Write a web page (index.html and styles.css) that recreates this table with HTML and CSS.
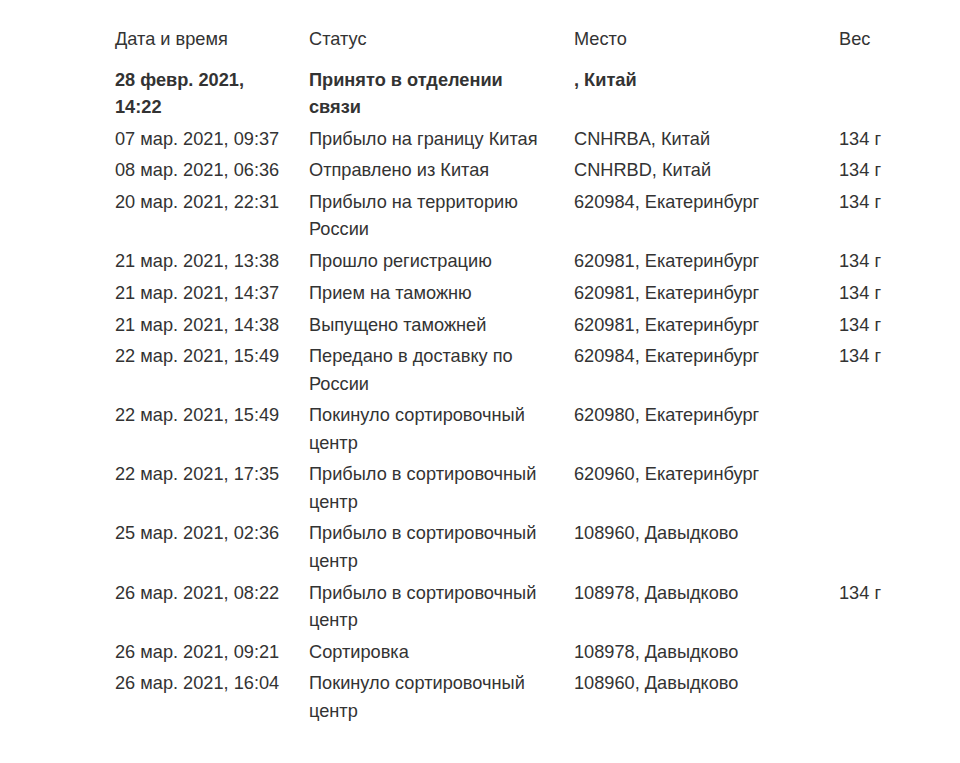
FILE: index.html
```html
<!DOCTYPE html>
<html lang="ru">
<head>
<meta charset="utf-8">
<link rel="stylesheet" href="styles.css">
</head>
<body>
<div class="page">
  <table class="track">
    <thead>
      <tr><th>Дата и время</th><th>Статус</th><th>Место</th><th>Вес</th></tr>
    </thead>
    <tbody>
      <tr class="first"><td>28 февр. 2021, 14:22</td><td>Принято в отделении связи</td><td>, Китай</td><td></td></tr>
      <tr><td>07 мар. 2021, 09:37</td><td>Прибыло на границу Китая</td><td>CNHRBA, Китай</td><td>134 г</td></tr>
      <tr><td>08 мар. 2021, 06:36</td><td>Отправлено из Китая</td><td>CNHRBD, Китай</td><td>134 г</td></tr>
      <tr><td>20 мар. 2021, 22:31</td><td>Прибыло на территорию России</td><td>620984, Екатеринбург</td><td>134 г</td></tr>
      <tr><td>21 мар. 2021, 13:38</td><td>Прошло регистрацию</td><td>620981, Екатеринбург</td><td>134 г</td></tr>
      <tr><td>21 мар. 2021, 14:37</td><td>Прием на таможню</td><td>620981, Екатеринбург</td><td>134 г</td></tr>
      <tr><td>21 мар. 2021, 14:38</td><td>Выпущено таможней</td><td>620981, Екатеринбург</td><td>134 г</td></tr>
      <tr><td>22 мар. 2021, 15:49</td><td>Передано в доставку по России</td><td>620984, Екатеринбург</td><td>134 г</td></tr>
      <tr><td>22 мар. 2021, 15:49</td><td>Покинуло сортировочный центр</td><td>620980, Екатеринбург</td><td></td></tr>
      <tr><td>22 мар. 2021, 17:35</td><td>Прибыло в сортировочный центр</td><td>620960, Екатеринбург</td><td></td></tr>
      <tr><td>25 мар. 2021, 02:36</td><td>Прибыло в сортировочный центр</td><td>108960, Давыдково</td><td></td></tr>
      <tr><td>26 мар. 2021, 08:22</td><td>Прибыло в сортировочный центр</td><td>108978, Давыдково</td><td>134 г</td></tr>
      <tr><td>26 мар. 2021, 09:21</td><td>Сортировка</td><td>108978, Давыдково</td><td></td></tr>
      <tr><td>26 мар. 2021, 16:04</td><td>Покинуло сортировочный центр</td><td>108960, Давыдково</td><td></td></tr>
    </tbody>
  </table>
</div>
</body>
</html>
```

FILE: styles.css
```css
html, body {
  margin: 0;
  padding: 0;
  background: #ffffff;
}
body {
  font-family: "Liberation Sans", Arial, sans-serif;
  font-size: 18.2px;
  color: #333333;
}
.page {
  padding: 23.5px 0 0 115px;
}
.track {
  border-collapse: collapse;
  table-layout: fixed;
  width: 790px;
}
.track th,
.track td {
  text-align: left;
  vertical-align: top;
  font-weight: normal;
  line-height: 27.4px;
  padding: 2.15px 28px 2.15px 0;
}
.track th:nth-child(1), .track td:nth-child(1) { width: 174px; padding-right: 20px; }
.track th:nth-child(2), .track td:nth-child(2) { width: 237px; }
.track th:nth-child(3), .track td:nth-child(3) { width: 237px; }
.track th:nth-child(4), .track td:nth-child(4) { width: 94px; }
.track th {
  padding-bottom: 11.4px;
}
.track tr.first td {
  font-weight: bold;
}
```
